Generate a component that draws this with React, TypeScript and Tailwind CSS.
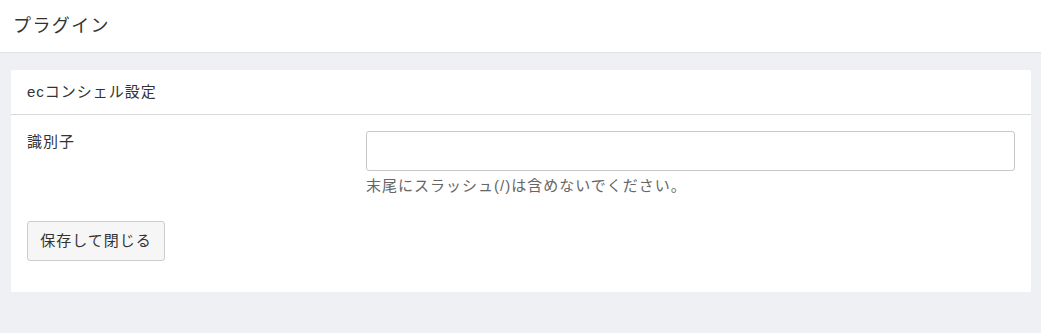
import React from 'react';

export default function App() {
  return (
    <div
      className="min-h-[333px] bg-[#eef0f3] text-[#333]"
      style={{ fontFamily: '"Liberation Sans", "Noto Sans CJK JP", sans-serif' }}
    >
      <header className="h-[53px] bg-white border-b border-[#dfe1e4] flex items-center px-[13px]">
        <h1 className="text-[18px] leading-none tracking-[1.4px]">プラグイン</h1>
      </header>

      <div className="pt-[17px] pl-[11px] pr-[10px]">
        <div className="bg-white rounded-[2px]">
          <div className="h-[45px] flex items-center px-4 border-b border-[#d7d9dc] text-[15px] tracking-[1px]">
            ecコンシェル設定
          </div>
          <div className="px-4 pt-4 pb-[31px]">
            <div className="flex">
              <label className="w-[339px] shrink-0 text-[15px] tracking-[1px] leading-[20px] pt-[1px]">識別子</label>
              <div className="flex-1">
                <input
                  type="text"
                  className="block w-full h-[40px] border border-[#c8c8c8] rounded-[3px] bg-white outline-none px-3"
                />
                <p className="mt-[5px] text-[15px] tracking-[1px] text-[#666] leading-[20px]">
                  末尾にスラッシュ(/)は含めないでください。
                </p>
              </div>
            </div>
            <button className="mt-[25px] h-[40px] w-[138px] border border-[#ccc] rounded-[3px] bg-[#f6f6f6] text-[15px] tracking-[1px] text-[#333]">
              保存して閉じる
            </button>
          </div>
        </div>
      </div>
    </div>
  );
}
